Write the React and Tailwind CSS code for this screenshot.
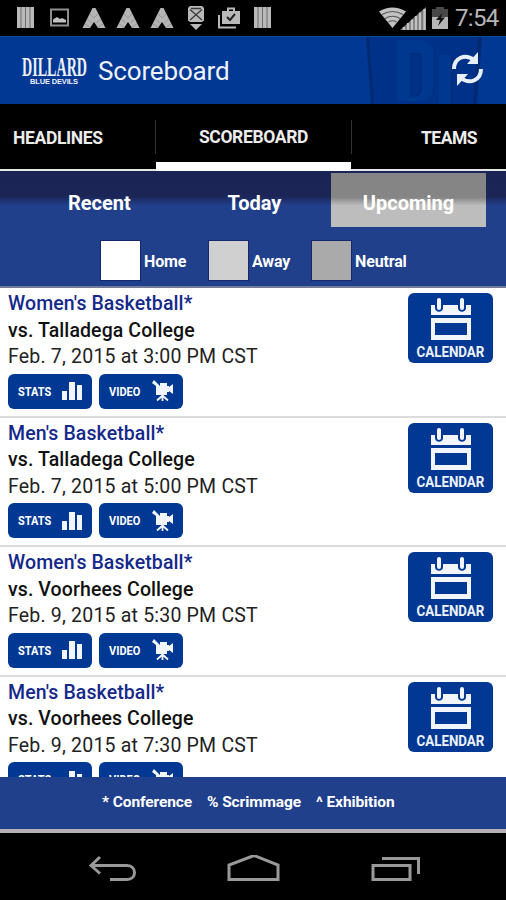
import React from 'react';

const games = [
  { sport: "Women's Basketball*", opponent: 'vs. Talladega College', date: 'Feb. 7, 2015 at 3:00 PM CST' },
  { sport: "Men's Basketball*", opponent: 'vs. Talladega College', date: 'Feb. 7, 2015 at 5:00 PM CST' },
  { sport: "Women's Basketball*", opponent: 'vs. Voorhees College', date: 'Feb. 9, 2015 at 5:30 PM CST' },
  { sport: "Men's Basketball*", opponent: 'vs. Voorhees College', date: 'Feb. 9, 2015 at 7:30 PM CST' },
];

const BarsIcon = () => (
  <svg width="18" height="22" viewBox="0 0 18 22">
    <path d="M0 0h17v21H0z" fill="#b9b9b9" />
    <path d="M3.500 0h1v21h-1zM8 0h1v21H8zM12.500 0h1v21h-1z" fill="#6d6d6d" />
  </svg>
);

const ChevronIcon = () => (
  <svg width="24" height="20" viewBox="0 0 24 20">
    <path d="M10.500 0h3L23.500 20h-7.500L12 14l-4 6H.5z" fill="#b5b5b5" />
    <path d="m8 6 4 4 4-4M5.500 11l4 4M3 16l5 3M18.500 11l-4 4M21 16l-5 3" fill="none" stroke="#959595" strokeWidth="1" />
  </svg>
);

const StatusBar = () => (
  <div className="h-9 bg-black text-[#b5b5b5]">
    <div className="flex h-full items-center pl-[17px]">
      <BarsIcon />
      <svg className="ml-[14px]" width="21" height="20" viewBox="0 0 21 20">
        <path d="M2 1.500h17v16H2z" fill="none" stroke="#8f8f8f" strokeWidth="2" />
        <path d="M4 14.500v-3l4-2.500 3 2 2-1 4 2v2.500z" fill="#c2c2c2" />
      </svg>
      <div className="ml-[12px] flex gap-[10px]">
        <ChevronIcon />
        <ChevronIcon />
        <ChevronIcon />
      </div>
      <svg className="ml-[14px]" width="16" height="24" viewBox="0 0 16 24">
        <path d="M2 0h12l2 2v12.500L14 16H2L0 14.500V2z" fill="#b9b9b9" />
        <path d="M2 18h12l-6 6z" fill="#b9b9b9" />
        <path d="m2 3.500 12 10.500M14 3.500 2 14M3 2.500h10" stroke="#3a3a3a" strokeWidth="1.300" fill="none" />
      </svg>
      <svg className="ml-[14px]" width="23" height="22" viewBox="0 0 23 22">
        <path d="M1 8v12.500h17" fill="none" stroke="#b9b9b9" strokeWidth="2" />
        <path d="M4 4h18v13H4z" fill="#b9b9b9" />
        <path d="M10 5V1.500h6V5" fill="none" stroke="#b9b9b9" strokeWidth="2" />
        <path d="m9 10 3 3 5-6" fill="none" stroke="#222" strokeWidth="2" />
      </svg>
      <div className="ml-[13px]">
        <BarsIcon />
      </div>
      <svg className="ml-[107px]" width="28" height="22" viewBox="0 0 28 22">
        <path d="M0 4.500Q13.500-3.500 27 4.500L13.500 21z" fill="#c2c2c2" />
        <path d="M3 7.500q10.500-6 21 0M6 11.500q7.500-4.500 15 0M9.500 15q4-2.500 8 0" fill="none" stroke="#555" strokeWidth="1.200" />
      </svg>
      <svg className="-ml-[7px]" width="26" height="23" viewBox="0 0 26 23">
        <path d="M26 0v23H0z" fill="#777" />
        <path d="M4 20v3M8 16v7M12 12.500V23M16 9v14M20 5.500V23M24.500 2v21" stroke="#c2c2c2" strokeWidth="2.400" />
      </svg>
      <svg className="ml-[6px]" width="16" height="22" viewBox="0 0 16 22">
        <path d="M4 0h8v2h4v9H0V2h4z" fill="#484848" />
        <path d="M0 10h16v12H0z" fill="#b5b5b5" />
        <path d="M10 6 4 13h4l-2 6 7-8.500H9z" fill="#111" />
      </svg>
      <span className="ml-[7px] text-[24px] leading-none tracking-[-0.7px]">7:54</span>
    </div>
  </div>
);

const Logo = () => (
  <svg className="overflow-visible" width="67" height="30" viewBox="0 0 67 30" fill="#eef0fa">
    <text x="1" y="19.500" textLength="65" lengthAdjust="spacingAndGlyphs" fontFamily="Liberation Serif, serif" fontWeight="700" fontSize="28">
      DILLARD
    </text>
    <text x="9" y="28" textLength="48" lengthAdjust="spacing" fontFamily="Liberation Sans Narrow, Liberation Sans, sans-serif" fontWeight="700" fontSize="7.500">
      BLUE DEVILS
    </text>
  </svg>
);

const Header = () => (
  <header className="relative flex h-[68px] items-center border-t border-[#0b4a9c] bg-[#003893] pl-[21px]">
    {/* faded emblem behind the refresh button */}
    <svg className="absolute top-0 right-0" width="146" height="67" viewBox="0 0 146 67">
      <path d="M7 0h114l-5 67H12z" fill="#003189" />
      <path d="M6 0h3l5 67h-3zM118 0h4l-5 67h-4z" fill="#002a72" />
      <path d="M37 3h24q12 2 12 12v36q0 11-12 13H37zM51 16v44h5q5-2 5-8V19l-3-3z" fill="#00388f" fillRule="evenodd" />
      <path d="M51 60V17h9l1 3v32l-4 7" fill="none" stroke="#002c78" strokeWidth="1.500" />
      <path d="M79 18h12v49H79z" fill="#00388f" />
      <path d="M92 18v49" stroke="#002c78" strokeWidth="1.500" />
    </svg>
    <Logo />
    <h1 className="ml-[10px] text-[26px] leading-none tracking-[-0.150px] text-[#eef2fb]">Scoreboard</h1>
    <svg className="absolute top-[15px] right-[22px]" width="33" height="35" viewBox="0 0 33 35">
      <path d="M3 17C3 6 14 1 23 8M30 17C30 28 19 33 10 26" fill="none" stroke="#e6effb" strokeWidth="4" />
      <path d="M27 0v12H16zM6 34V22h11z" fill="#e6effb" />
    </svg>
  </header>
);

const Tabs = () => (
  <nav className="flex h-[67px] bg-black text-[17.500px] font-bold text-[#ececec]">
    <div className="flex w-[156px] items-center border-b-2 border-[#e5e5e5] pt-[3px] pl-[13px]">
      <span className="tracking-[-0.350px]">HEADLINES</span>
    </div>
    <div className="flex w-[195px] items-center justify-center border-b-[9px] border-white">
      <span className="mt-[9px] tracking-[-0.350px]">SCOREBOARD</span>
    </div>
    <div className="flex flex-1 items-center border-b-2 border-[#e5e5e5] pt-[3px] pl-[70px]">
      <span className="tracking-[-0.500px]">TEAMS</span>
    </div>
    <div className="absolute top-[120px] left-[155px] h-[34px] w-px bg-[#333]" />
    <div className="absolute top-[120px] left-[351px] h-[34px] w-px bg-[#333]" />
  </nav>
);

const Legend = ({ color, label, className }) => (
  <div className={`flex items-center gap-[3px] ${className}`}>
    <div className={`size-[41px] border border-[#14286b] ${color}`} />
    <span className="mt-[2px] text-base font-bold tracking-[-0.150px]">{label}</span>
  </div>
);

const Filters = () => (
  <section className="h-[115px] bg-linear-to-b from-[#1a2455] from-0% via-[#1b2657] via-22% to-[#21408c] to-30% pt-[2px] text-white">
    <div className="flex h-[54px] text-[20px] font-bold">
      <div className="flex w-[176px] items-center pt-[6px] pl-[68px]">Recent</div>
      <div className="flex w-[155px] items-center justify-center pt-[6px] pl-[2px]">Today</div>
      <div className="flex w-[155px] items-center justify-center bg-linear-to-b from-[#858585] from-45% to-[#bdbdbd] to-60% pt-[6px]">Upcoming</div>
    </div>
    <div className="flex pt-[13px] pl-[100px]">
      <Legend color="bg-white" label="Home" className="w-[108px]" />
      <Legend color="bg-[#d0d0d0]" label="Away" className="w-[103px]" />
      <Legend color="bg-[#aaaaaa]" label="Neutral" className="w-[110px]" />
    </div>
  </section>
);

const StatsIcon = () => (
  <svg width="21" height="20" viewBox="0 0 21 20" fill="#f2f5fc">
    <path d="M0 10h5v9H0zM7 1h6v18H7zM15 4h5v15h-5z" />
  </svg>
);

const VideoIcon = () => (
  <svg width="22" height="22" viewBox="0 0 22 22" fill="#f2f5fc">
    <path d="M2 0 0 3l4 3v9h11v-3h2V6h-2V3H8v3zM17 7l4-3v10l-4-3z" />
    <path d="M10.500 14v7M10 16l-5 4.500M11 16l5 4.500" fill="none" stroke="#f2f5fc" strokeWidth="1.800" />
  </svg>
);

const ActionButton = ({ label, icon }) => (
  <button className="flex h-[35px] w-[84px] items-center justify-between rounded-[6px] bg-[#003893] pr-[9px] pl-[10px] text-white">
    <span className="mt-[2px] w-[33px] origin-left scale-x-88 text-left text-[12.500px] font-bold">{label}</span>
    {icon}
  </button>
);

const CalendarButton = () => (
  <button className="flex h-[70px] w-[85px] flex-col items-center rounded-[6px] bg-[#003893] pt-[5px] text-[#eef2fb]">
    <svg width="40" height="43" viewBox="0 0 40 43" fill="#f2f5fc">
      <path d="M0 7h4v3c0 5 8 5 8 0V7h15v3c0 5 8 5 8 0V7h5v10H0z" />
      <rect x="6" y="0" width="4" height="12" rx="2" />
      <rect x="29" y="0" width="4" height="12" rx="2" />
      <path d="M0 20h40v22H0zM4 25v12h32V25z" fillRule="evenodd" />
    </svg>
    <span className="scale-x-86 text-[15.500px] leading-[22px] font-bold">CALENDAR</span>
  </button>
);

const GameRow = ({ game }) => (
  <div className="flex h-[129.500px] shrink-0 justify-between border-b-2 border-[#dcdcdc] pt-[3px] pr-[13px] pl-[8px]">
    <div>
      <div className="text-[19.500px] leading-[26.500px] font-medium tracking-[0.1px] text-[#14298a]">{game.sport}</div>
      <div className="text-[19.500px] leading-[26.500px] font-medium tracking-[0.1px] text-[#111]">{game.opponent}</div>
      <div className="text-[19.500px] leading-[26.500px] tracking-[0.2px] text-[#222]">{game.date}</div>
      <div className="mt-[3px] flex gap-[7px]">
        <ActionButton label="STATS" icon={<StatsIcon />} />
        <ActionButton label="VIDEO" icon={<VideoIcon />} />
      </div>
    </div>
    <div className="pt-[2px]">
      <CalendarButton />
    </div>
  </div>
);

const NavBar = () => (
  <div className="h-[67px] bg-black pt-[22px] pl-[88px]">
    <svg width="340" height="30" viewBox="0 0 340 30" fill="none" stroke="#999" strokeWidth="3">
      <path d="M12 2 3 10.500l9 8M3 10.500h36c10 0 10 14 0 14H22" />
      <path d="M141 24.500V10l25-9.500L190 10v14.500z" />
      <path d="M285 10.500h37v14h-37zM294 3.500h36.500V19" />
    </svg>
  </div>
);

const App = () => {
  return (
    <div className="relative flex h-[900px] w-[506px] flex-col overflow-hidden bg-white font-[Roboto,sans-serif]">
      <StatusBar />
      <Header />
      <Tabs />
      <Filters />
      <main className="flex h-[491px] flex-col overflow-hidden border-t-2 border-[#737c99]">
        {games.map((game, index) => (
          <GameRow key={index} game={game} />
        ))}
      </main>
      <footer className="flex h-[56px] items-center gap-[15px] border-b-4 border-[#b5afb5] bg-[#21408c] pl-[102px] text-[15.500px] font-bold tracking-[-0.1px] text-white">
        <span>* Conference</span>
        <span>% Scrimmage</span>
        <span>^ Exhibition</span>
      </footer>
      <NavBar />
    </div>
  );
};

export default App;
